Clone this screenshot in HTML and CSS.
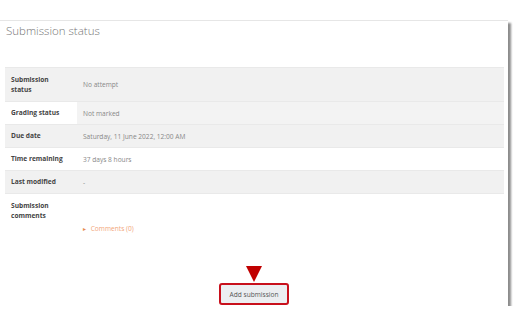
FILE: index.html
```html
<!DOCTYPE html>
<html lang="en">
<head>
  <meta charset="UTF-8">
  <meta name="viewport" content="width=device-width, initial-scale=1">
  <title>Submission status</title>
  <link rel="stylesheet" href="styles.css">
</head>
<body>

  <div class="panel">
    <h2 class="title">Submission status</h2>

    <table class="status-table">
      <tr class="row-tall shaded">
        <th>Submission status</th>
        <td>No attempt</td>
      </tr>
      <tr class="row-grading">
        <th>Grading status</th>
        <td>Not marked</td>
      </tr>
      <tr class="shaded">
        <th>Due date</th>
        <td>Saturday, 11 June 2022, 12:00 AM</td>
      </tr>
      <tr>
        <th>Time remaining</th>
        <td>37 days 8 hours</td>
      </tr>
      <tr class="shaded">
        <th>Last modified</th>
        <td>-</td>
      </tr>
      <tr class="row-comments">
        <th>Submission comments</th>
        <td><a href="#" class="comments-link"><span class="caret">&#9656;</span> Comments (0)</a></td>
      </tr>
    </table>

    <div class="actions">
      <span class="arrow"></span>
      <button class="add-btn">Add submission</button>
    </div>
  </div>

</body>
</html>
```

FILE: styles.css
```css
/* Global */
body {
  margin: 0;
  background: #fff;
  font-family: 'Open Sans', 'Liberation Sans', sans-serif;
  color: #333;
}
/* Carte principale */
.panel {
  width: 508px;
  height: 286px;
  margin-top: 20px;
  border-top: 1px solid #e6e6e6;
  box-sizing: border-box;
  box-shadow: 3px 3px 2px rgba(0, 0, 0, 0.45);
  display: flex;
  flex-direction: column;
}
.title {
  margin: 0;
  padding: 2px 0 0 6px;
  font-size: 11.5px;
  line-height: 16px;
  font-weight: 300;
  color: #777;
  height: 46px;
  box-sizing: border-box;
}
/* Tableau */
.status-table {
  margin-left: 5px;
  width: 499px;
  border-collapse: collapse;
  font-size: 6.6px;
}
.status-table tr {
  height: 23px;
  border-top: 1px solid #e9e9e9;
}
.status-table th {
  width: 72px;
  text-align: left;
  font-weight: 700;
  color: #444;
  padding: 0 11px 0 6px;
  line-height: 10px;
  box-sizing: border-box;
}
.status-table td {
  color: #888;
  padding: 0 6px;
}
.shaded {
  background: #f1f1f1;
}
.row-tall {
  height: 34px !important;
}
.row-grading td {
  background: #f3f3f3;
}
.row-comments th {
  vertical-align: top;
  padding-top: 7px;
}
.row-comments td {
  padding-top: 30px;
  vertical-align: top;
  height: 40px;
}
.comments-link {
  color: #f2a67a;
  text-decoration: none;
}
.caret {
  color: #e88a50;
  margin-right: 3px;
  font-size: 6px;
}
/* Bouton */
.actions {
  margin-top: auto;
  display: flex;
  flex-direction: column;
  align-items: center;
  padding-bottom: 1px;
}
.arrow {
  width: 0;
  height: 0;
  border-left: 8px solid transparent;
  border-right: 8px solid transparent;
  border-top: 16px solid #c00000;
  margin-bottom: 1px;
}
.add-btn {
  width: 70px;
  height: 22px;
  padding: 0;
  border: 2px solid #c8101c;
  border-radius: 3px;
  background: #eceef1;
  color: #555;
  font-family: 'Open Sans', 'Liberation Sans', sans-serif;
  font-size: 6.6px;
}
```
